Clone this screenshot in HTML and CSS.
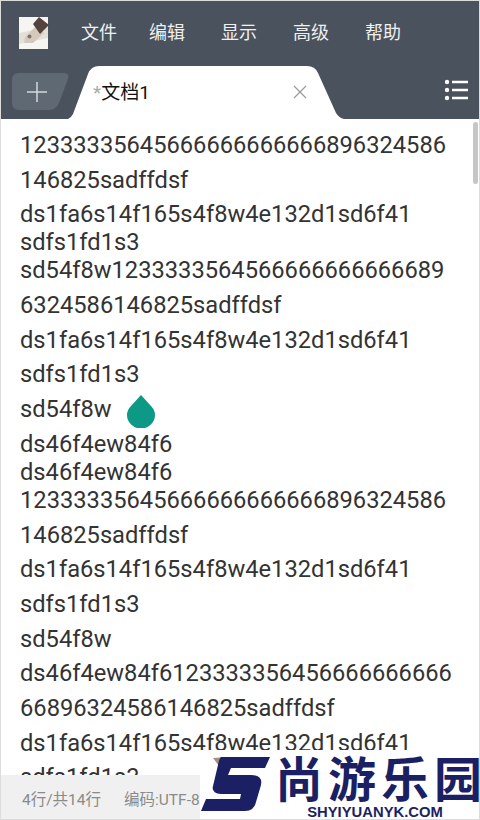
FILE: index.html
```html
<!DOCTYPE html>
<html>
<head>
    <title>文档1</title>
    <link rel="stylesheet" href="styles.css">
</head>
<body>
    <div class="frame">
        <div class="topbar">
            <svg class="app-icon" width="30" height="33" viewBox="0 0 30 33">
                <rect x="0" y="1" width="29" height="32" fill="#f6f5f2"/>
                <path d="M0 17L29 11V22L0 28Z" fill="#e3e0da"/>
                <path d="M6 21L18 9L25 17L14 27H5Z" fill="#d3c9bc"/>
                <path d="M14 8L20 1L30 9L21 18Z" fill="#54433c"/>
                <circle cx="10.500" cy="20.500" r="2" fill="#7d756e"/>
            </svg>
            <div class="menu">
                <span class="menu-item first">文件</span>
                <span class="menu-item">编辑</span>
                <span class="menu-item">显示</span>
                <span class="menu-item">高级</span>
                <span class="menu-item">帮助</span>
            </div>
        </div>

        <div class="tabbar">
            <svg class="add-tab" width="58" height="38" viewBox="0 0 58 38">
                <path d="M7 0H52Q58 0 56 6L47 30Q44 37 37 37H7Q0 37 0 30V7Q0 0 7 0Z" fill="#5f6973"/>
                <path d="M25 9V29M15 19H35" stroke="#d5d8db" stroke-width="1.500" fill="none"/>
            </svg>
            <div class="tab">
                <svg class="tab-shape" width="276" height="53" viewBox="0 0 276 53">
                    <path d="M0 53Q3 52 5 48L20 8Q23 0 31 0H239Q247 0 250 7L268 47Q271 52 276 53Z" fill="#fff"/>
                </svg>
                <span class="tab-title"><span class="star">*</span>文档1</span>
                <svg class="tab-close" width="16" height="16" viewBox="0 0 16 16">
                    <path d="M2 2L14 14M14 2L2 14" stroke="#999" stroke-width="1.200" fill="none"/>
                </svg>
            </div>
            <svg class="list-icon" width="24" height="22" viewBox="0 0 24 22">
                <circle cx="3" cy="3" r="2.200" fill="#fff"/>
                <circle cx="3" cy="11" r="2.200" fill="#fff"/>
                <circle cx="3" cy="19" r="2.200" fill="#fff"/>
                <path d="M8 3H24M8 11H24M8 19H24" stroke="#fff" stroke-width="2.400" fill="none"/>
            </svg>
        </div>

        <div class="editor">
            <div class="line">12333335645666666666666896324586</div>
            <div class="line gap">146825sadffdsf</div>
            <div class="line gap">ds1fa6s14f165s4f8w4e132d1sd6f41</div>
            <div class="line">sdfs1fd1s3</div>
            <div class="line">sd54f8w1233333564566666666666689</div>
            <div class="line gap">6324586146825sadffdsf</div>
            <div class="line gap">ds1fa6s14f165s4f8w4e132d1sd6f41</div>
            <div class="line gap">sdfs1fd1s3</div>
            <div class="line gap">sd54f8w</div>
            <div class="line gap">ds46f4ew84f6</div>
            <div class="line">ds46f4ew84f6</div>
            <div class="line">12333335645666666666666896324586</div>
            <div class="line gap">146825sadffdsf</div>
            <div class="line gap">ds1fa6s14f165s4f8w4e132d1sd6f41</div>
            <div class="line gap">sdfs1fd1s3</div>
            <div class="line gap">sd54f8w</div>
            <div class="line gap">ds46f4ew84f6123333356456666666666</div>
            <div class="line gap">66896324586146825sadffdsf</div>
            <div class="line gap">ds1fa6s14f165s4f8w4e132d1sd6f41</div>
            <div class="line gap">sdfs1fd1s3</div>

            <div class="scrollbar"></div>
            <svg class="cursor-handle" width="28" height="33" viewBox="0 0 28 33">
                <path d="M14 0L24 11Q28 15 28 20A14 13.500 0 0 1 0 20Q0 15 4 11Z" fill="#0c9a87"/>
            </svg>
        </div>

        <div class="statusbar">
            <span>4行/共14行</span>
            <span>编码:UTF-8</span>
        </div>

        <div class="watermark">
            <svg class="wm-s" width="69" height="54" viewBox="0 0 69 54">
                <path d="M12 1L27 0L18 9Z" fill="#a3917f"/>
                <path d="M20 0H69L64 11H30L27 18H50Q62 18 60 28L55 45Q53 54 44 54H0L5 42H39L40 37H20Q10 36 12 29L17 8Q18 2 20 0Z" fill="#1b1f63"/>
            </svg>
            <div class="wm-text">
                <div class="wm-name">尚游乐园</div>
                <div class="wm-url">SHYIYUANYK.COM</div>
            </div>
        </div>
    </div>
</body>
</html>
```

FILE: styles.css
```css
html, body {
    margin: 0;
    padding: 0;
}
body {
    width: 480px;
    height: 820px;
    overflow: hidden;
    font-family: Roboto, "Noto Sans CJK SC", sans-serif;
}
.frame {
    position: relative;
    box-sizing: border-box;
    width: 480px;
    height: 820px;
    border: 1px solid #dcdcdc;
    overflow: hidden;
    background: #fff;
}
.topbar {
    display: flex;
    align-items: center;
    height: 65px;
    background: #4a535d;
    padding-left: 18px;
}
.app-icon {
    display: block;
    margin-top: -2px;
}
.menu {
    display: flex;
    gap: 36px;
    margin-left: 32px;
    margin-top: -1px;
}
.menu-item {
    font-size: 18px;
    line-height: 26px;
    color: #f0f0f0;
}
.menu-item.first {
    margin-right: -4px;
}
.tabbar {
    display: flex;
    height: 53px;
    background: #4a535d;
    padding-left: 11px;
}
.add-tab {
    display: block;
    margin-top: 7px;
    flex: none;
}
.tab {
    position: relative;
    flex: none;
    display: flex;
    align-items: center;
    width: 276px;
    height: 53px;
    margin-left: -2px;
    padding-left: 25px;
    box-sizing: border-box;
}
.tab-shape {
    position: absolute;
    left: 0;
    top: 0;
}
.tab-title {
    position: relative;
    font-size: 19px;
    color: #111;
    margin-top: -4px;
}
.star {
    color: #aaa;
}
.tab-close {
    position: absolute;
    left: 224px;
    top: 18px;
}
.list-icon {
    display: block;
    flex: none;
    margin-top: 13px;
    position: absolute;
    left: 443px;
}
.editor {
    padding: 12px 0 0 19px;
    color: #333;
    font-size: 23.700px;
    line-height: 28px;
    white-space: nowrap;
}
.line.gap {
    margin-top: 6.700px;
}
.scrollbar {
    position: absolute;
    left: 472px;
    top: 121px;
    width: 5px;
    height: 62px;
    border-radius: 3px;
    background: #c6c6c6;
}
.cursor-handle {
    position: absolute;
    left: 126px;
    top: 394px;
}
.statusbar {
    position: absolute;
    left: 0;
    bottom: 0;
    display: flex;
    gap: 23px;
    box-sizing: border-box;
    width: 240px;
    height: 44px;
    padding: 1px 0 0 21px;
    align-items: center;
    background: #f0f0f0;
    color: #8a8a8a;
    font-size: 15.500px;
    white-space: nowrap;
    overflow: hidden;
}
.watermark {
    position: absolute;
    left: 199px;
    top: 749px;
    display: flex;
    width: 281px;
    height: 71px;
    background: #fff;
}
.wm-s {
    display: block;
    flex: none;
    margin: 7px 0 0 1px;
}
.wm-text {
    flex: none;
    width: 200px;
    margin-left: 5px;
    padding-top: 2px;
    text-align: center;
    color: #1b1f63;
}
.wm-name {
    font-family: "Noto Sans CJK SC", sans-serif;
    font-weight: 700;
    font-size: 48px;
    line-height: 49px;
    letter-spacing: 5px;
    text-align: left;
    white-space: nowrap;
}
.wm-url {
    font-family: "Liberation Sans", sans-serif;
    font-weight: 700;
    font-size: 14.800px;
    line-height: 16px;
    margin-top: 3px;
    white-space: nowrap;
}
```
